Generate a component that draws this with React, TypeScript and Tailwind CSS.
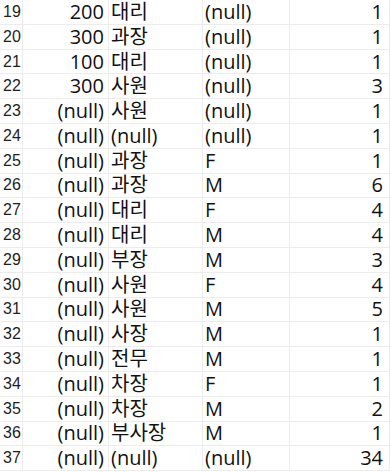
import React from 'react';

type Row = { no: number; amt: string; pos: string; gender: string; cnt: string };

const rows: Row[] = [
  { no: 19, amt: '200', pos: '대리', gender: '(null)', cnt: '1' },
  { no: 20, amt: '300', pos: '과장', gender: '(null)', cnt: '1' },
  { no: 21, amt: '100', pos: '대리', gender: '(null)', cnt: '1' },
  { no: 22, amt: '300', pos: '사원', gender: '(null)', cnt: '3' },
  { no: 23, amt: '(null)', pos: '사원', gender: '(null)', cnt: '1' },
  { no: 24, amt: '(null)', pos: '(null)', gender: '(null)', cnt: '1' },
  { no: 25, amt: '(null)', pos: '과장', gender: 'F', cnt: '1' },
  { no: 26, amt: '(null)', pos: '과장', gender: 'M', cnt: '6' },
  { no: 27, amt: '(null)', pos: '대리', gender: 'F', cnt: '4' },
  { no: 28, amt: '(null)', pos: '대리', gender: 'M', cnt: '4' },
  { no: 29, amt: '(null)', pos: '부장', gender: 'M', cnt: '3' },
  { no: 30, amt: '(null)', pos: '사원', gender: 'F', cnt: '4' },
  { no: 31, amt: '(null)', pos: '사원', gender: 'M', cnt: '5' },
  { no: 32, amt: '(null)', pos: '사장', gender: 'M', cnt: '1' },
  { no: 33, amt: '(null)', pos: '전무', gender: 'M', cnt: '1' },
  { no: 34, amt: '(null)', pos: '차장', gender: 'F', cnt: '1' },
  { no: 35, amt: '(null)', pos: '차장', gender: 'M', cnt: '2' },
  { no: 36, amt: '(null)', pos: '부사장', gender: 'M', cnt: '1' },
  { no: 37, amt: '(null)', pos: '(null)', gender: '(null)', cnt: '34' },
];

// grid cell: light gray lines on right and bottom, like the query result grid
const cell = 'h-[24.8px] flex items-center border-b border-r border-[#ececec] whitespace-nowrap leading-[24px]';

export default function App() {
  return (
    <div className="w-[390px] h-[472px] bg-white overflow-hidden">
      <div
        className="grid grid-cols-[23px_86px_94px_87px_1fr] text-[20px] text-[#111]"
        style={{ fontFamily: '"Open Sans", "Noto Sans CJK KR", sans-serif' }}
      >
        {rows.map((r) => (
          <React.Fragment key={r.no}>
            <div
              className={`${cell} pl-[3px] text-[16px] text-[#1e1e1e]`}
              style={{ fontFamily: '"Liberation Sans", Arial, sans-serif' }}
            >
              {r.no}
            </div>
            <div className={`${cell} justify-end pr-[4px]`}>{r.amt}</div>
            <div className={`${cell} pl-[2px]`}>{r.pos}</div>
            <div className={`${cell} pl-[2px]`}>{r.gender}</div>
            <div className={`${cell} justify-end pr-[6px]`}>{r.cnt}</div>
          </React.Fragment>
        ))}
      </div>
    </div>
  );
}
